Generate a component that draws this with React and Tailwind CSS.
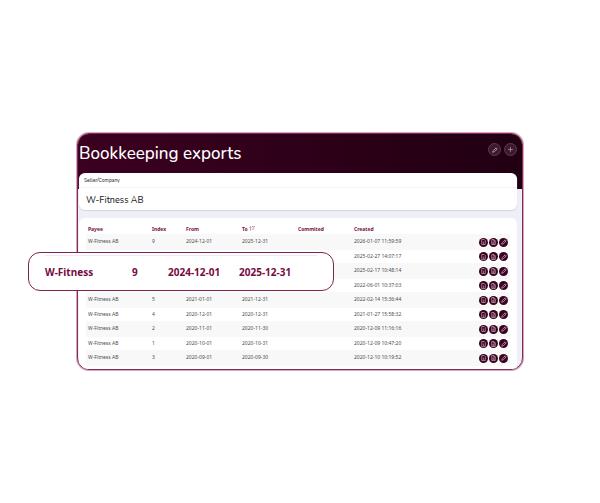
import React from 'react';
import { Plus } from 'lucide-react';

const ROWS = [
  { payee: 'W-Fitness AB', index: 9, from: '2024-12-01', to: '2025-12-31', created: '2026-01-07 11:59:59' },
  { created: '2025-02-27 14:07:17' },
  { created: '2025-02-17 10:48:14' },
  { created: '2022-06-01 10:37:03' },
  { payee: 'W-Fitness AB', index: 5, from: '2021-01-01', to: '2021-12-31', created: '2022-02-14 15:36:44' },
  { payee: 'W-Fitness AB', index: 4, from: '2020-12-01', to: '2020-12-31', created: '2021-01-27 15:58:32' },
  { payee: 'W-Fitness AB', index: 2, from: '2020-11-01', to: '2020-11-30', created: '2020-12-09 11:16:16' },
  { payee: 'W-Fitness AB', index: 1, from: '2020-10-01', to: '2020-10-31', created: '2020-12-09 10:47:20' },
  { payee: 'W-Fitness AB', index: 3, from: '2020-09-01', to: '2020-09-30', created: '2020-12-10 10:19:52' },
];

function FileIcon() {
  return (
    <svg viewBox="0 0 10 12" className="h-[6px] w-[5px]" fill="none" stroke="currentColor" strokeWidth="1.4">
      <path d="M1.5 1h5l2 2v8h-7z" />
      <path d="M5 5v4M3.8 7.6 5 9l1.2-1.4" strokeWidth="1" />
    </svg>
  );
}

function FileTextIcon() {
  return (
    <svg viewBox="0 0 10 12" className="h-[6px] w-[5px]" fill="none" stroke="currentColor" strokeWidth="1.4">
      <path d="M1.5 1h4l3 3v7h-7z" />
      <path d="M5.5 1v3h3M3 6.5h4M3 8.7h4" />
    </svg>
  );
}

function PencilIcon() {
  return (
    <svg viewBox="0 0 12 12" className="size-[6px]" fill="none" stroke="currentColor" strokeWidth="1.5" strokeLinejoin="round">
      <path d="M1.5 10.5 2.2 7.6 8.2 1.6 10.4 3.8 4.4 9.8zM6.8 3l2.2 2.2" />
    </svg>
  );
}

function SortIcon() {
  return (
    <svg viewBox="0 0 12 10" className="h-[5px] w-[6px] text-[#b77f99]" fill="none" stroke="currentColor" strokeWidth="1.5">
      <path d="M3 9.5V1M1 3l2-2 2 2M6.5 1H12M6.5 4H11M6.5 7H9" />
    </svg>
  );
}

function HeaderButton({ label, children }) {
  return (
    <button aria-label={label} className="flex size-[13px] items-center justify-center rounded-full border border-[#5d3a4e] bg-[#41192f] text-[#c4afba]">
      {children}
    </button>
  );
}

function RowButton({ label, children }) {
  return (
    <button aria-label={label} className="flex size-[9px] items-center justify-center rounded-full bg-[#3a0420] text-[#c9a9b9]">
      {children}
    </button>
  );
}

export default function App() {
  return (
    <div className="min-h-screen bg-white px-[77px] py-[133px] font-['Noto_Sans',sans-serif]">
      <div className="relative">
        <main className="overflow-hidden rounded-xl border border-[#862a57] bg-[#eeeff7] shadow-[0_0_0_1px_#d3a9be]">
          <header className="flex h-[55px] items-start justify-between bg-linear-to-r from-[#3c0020] to-[#210012] pt-[9px] pr-[5px] pl-px">
            <h1 className="font-['Nunito','Lato',sans-serif] text-[17px] leading-[22px] font-medium text-white">Bookkeeping exports</h1>
            <div className="flex gap-[3px]">
              <HeaderButton label="Edit exports"><PencilIcon /></HeaderButton>
              <HeaderButton label="Add export"><Plus size={7} strokeWidth={2} /></HeaderButton>
            </div>
          </header>

          <div className="-mt-4 mr-[5px] ml-px">
            <section className="rounded-md bg-white font-['Nunito','Lato',sans-serif] shadow-[0_1px_1px_#d4d5dc]">
              <label htmlFor="seller" className="block border-b border-[#f3f3f5] px-[5px] pt-1 pb-[2px] text-[5px] leading-2 font-medium text-[#333]">
                Seller/Company
              </label>
              <input id="seller" readOnly value="W-Fitness AB" className="block h-[22px] w-full px-[7px] pt-px text-[9px] font-medium text-[#262626] outline-none" />
            </section>

            <section className="mt-2 rounded-t-md bg-white px-[7px] pt-[5px] pb-[3px]">
              <table className="w-full table-fixed text-left text-[5px] leading-2 text-[#4b4b4b]">
                <colgroup>
                  <col className="w-16" />
                  <col className="w-[34px]" />
                  <col className="w-14" />
                  <col className="w-14" />
                  <col className="w-14" />
                  <col />
                  <col className="w-[33px]" />
                </colgroup>
                <thead>
                  <tr className="h-[11px] text-[#74103f]">
                    <th className="px-[2px] py-0 font-bold">Payee</th>
                    <th className="px-[2px] py-0 font-bold">Index</th>
                    <th className="px-[2px] py-0 font-bold">From</th>
                    <th className="px-[2px] py-0 font-bold">
                      <span className="flex items-center gap-px">To <SortIcon /></span>
                    </th>
                    <th className="px-[2px] py-0 font-bold">Commited</th>
                    <th className="px-[2px] py-0 font-bold">Created</th>
                    <th aria-label="Actions" className="p-0"></th>
                  </tr>
                </thead>
                <tbody>
                  {ROWS.map(r => (
                    <tr key={r.created} className="h-[13px] odd:h-4 odd:bg-[#f8f8f8]">
                      <td className="px-[2px] pt-0 pb-[2px]">{r.payee}</td>
                      <td className="px-[2px] pt-0 pb-[2px]">{r.index}</td>
                      <td className="px-[2px] pt-0 pb-[2px]">{r.from}</td>
                      <td className="px-[2px] pt-0 pb-[2px]">{r.to}</td>
                      <td></td>
                      <td className="px-[2px] pt-0 pb-[2px]">{r.created}</td>
                      <td className="p-0">
                        <div className="flex justify-end gap-px pr-[2px]">
                          <RowButton label="Download"><FileIcon /></RowButton>
                          <RowButton label="View"><FileTextIcon /></RowButton>
                          <RowButton label="Edit"><PencilIcon /></RowButton>
                        </div>
                      </td>
                    </tr>
                  ))}
                </tbody>
              </table>
            </section>
          </div>
        </main>

        {/* Magnified row over the table */}
        <div className="absolute top-[119px] -left-[49px] h-[39px] w-[306px] rounded-xl border border-[#7c2450] bg-white px-4 pt-[2px] text-[10px] font-bold text-[#760c40]">
          <div className="border-t border-[#f1e9ed]"></div>
          <div className="flex h-8 items-center">
            <span className="w-[87px]">W-Fitness</span>
            <span className="w-9">9</span>
            <span className="w-[71px]">2024-12-01</span>
            <span>2025-12-31</span>
          </div>
        </div>
      </div>
    </div>
  );
}
